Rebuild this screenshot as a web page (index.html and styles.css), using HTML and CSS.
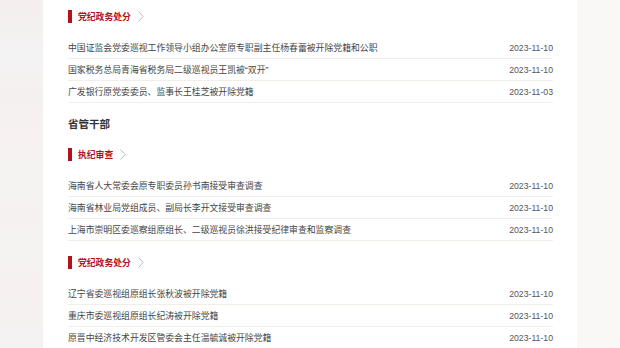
FILE: index.html
```html
<!DOCTYPE html>
<html lang="zh-CN">
<head>
    <meta charset="UTF-8">
    <meta name="viewport" content="width=device-width, initial-scale=1.0">
    <title>省管干部</title>
    <link rel="stylesheet" href="styles.css">
</head>
<body>
    <div class="page">
        <div class="side side-left"></div>

        <div class="card">
            <div class="cat">
                <span class="cat-name">党纪政务处分</span>
                <svg class="chevron" width="6" height="11" viewBox="0 0 6 11"><polyline points="0.5,0.5 5.2,5.5 0.5,10.5" fill="none" stroke="#bbbbbb" stroke-width="1"/></svg>
            </div>
            <ul class="news">
                <li><a href="#">中国证监会党委巡视工作领导小组办公室原专职副主任杨春蕾被开除党籍和公职</a><span class="date">2023-11-10</span></li>
                <li><a href="#">国家税务总局青海省税务局二级巡视员王凯被“双开”</a><span class="date">2023-11-10</span></li>
                <li><a href="#">广发银行原党委委员、监事长王桂芝被开除党籍</a><span class="date">2023-11-03</span></li>
            </ul>

            <h2 class="region">省管干部</h2>

            <div class="cat">
                <span class="cat-name">执纪审查</span>
                <svg class="chevron" width="6" height="11" viewBox="0 0 6 11"><polyline points="0.5,0.5 5.2,5.5 0.5,10.5" fill="none" stroke="#bbbbbb" stroke-width="1"/></svg>
            </div>
            <ul class="news">
                <li><a href="#">海南省人大常委会原专职委员孙书南接受审查调查</a><span class="date">2023-11-10</span></li>
                <li><a href="#">海南省林业局党组成员、副局长李开文接受审查调查</a><span class="date">2023-11-10</span></li>
                <li><a href="#">上海市崇明区委巡察组原组长、二级巡视员徐洪接受纪律审查和监察调查</a><span class="date">2023-11-10</span></li>
            </ul>

            <div class="cat cat-next">
                <span class="cat-name">党纪政务处分</span>
                <svg class="chevron" width="6" height="11" viewBox="0 0 6 11"><polyline points="0.5,0.5 5.2,5.5 0.5,10.5" fill="none" stroke="#bbbbbb" stroke-width="1"/></svg>
            </div>
            <ul class="news">
                <li><a href="#">辽宁省委巡视组原组长张秋波被开除党籍</a><span class="date">2023-11-10</span></li>
                <li><a href="#">重庆市委巡视组原组长纪涛被开除党籍</a><span class="date">2023-11-10</span></li>
                <li><a href="#">原晋中经济技术开发区管委会主任温毓诚被开除党籍</a><span class="date">2023-11-10</span></li>
            </ul>
        </div>

        <div class="side side-right"></div>
    </div>
</body>
</html>
```

FILE: styles.css
```css
* {
    margin: 0;
    padding: 0;
    box-sizing: border-box;
}

body {
    font-family: "Liberation Sans", Arial, "Noto Sans CJK SC", sans-serif;
    background: #f8f7f5;
    overflow: hidden;
}

.page {
    display: flex;
    height: 348px;
}

.side {
    flex: none;
}

.side-left {
    width: 43px;
    background: linear-gradient(180deg,
        #f5eeee 0%, #f3f1f0 8%, #f4f3f3 16%, #f5f0f0 28%,
        #f7f1f1 40%, #f4f3f2 52%, #f6f1f1 62%, #f4f3f2 72%,
        #f7f0f0 82%, #f3f2f2 100%);
}

.side-right {
    flex: 1;
    background: #f9f8f6;
}

.card {
    width: 534px;
    background: #fff;
    padding: 9px 24px 0 25px;
}

.cat {
    display: flex;
    align-items: center;
    height: 14px;
    margin-bottom: 14px;
}

.cat::before {
    content: "";
    width: 4px;
    height: 13px;
    background: #b3111b;
    margin-right: 6px;
}

.cat-name {
    color: #b3111b;
    font-size: 8.8px;
    font-weight: bold;
}

.chevron {
    margin-left: 7px;
}

.cat-next {
    margin-top: 14px;
}

.news {
    list-style: none;
}

.news li {
    display: flex;
    justify-content: space-between;
    align-items: center;
    height: 22px;
    border-bottom: 1px solid #f1eee8;
    font-size: 8.7px;
}

.news a {
    color: #454545;
    text-decoration: none;
    font-size: 8.85px;
}

.date {
    color: #555;
}

.region {
    font-size: 10.5px;
    font-weight: bold;
    color: #333;
    line-height: 14px;
    margin: 14px 0 16px;
}
```
